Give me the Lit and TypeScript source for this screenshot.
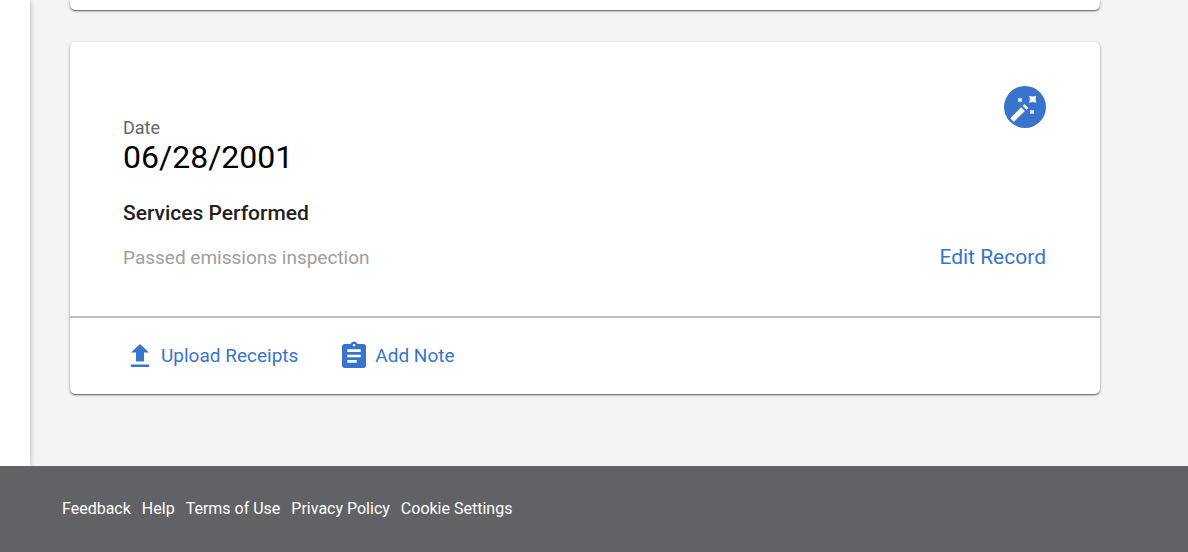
import { LitElement, html, css, svg } from "lit";
import { customElement } from "lit/decorators.js";

const wandIcon = svg`
  <path d="M7 31.4 16.6 21.8Q17.2 21.2 17.8 21.8L20.4 24.4Q21 25 20.4 25.6L10.6 35.2Q9.9 35.9 9.2 35.2L7 33Q6.2 32.2 7 31.4Z"/>
  <path d="M18.6 19.8 20 18.4Q20.4 18 20.8 18.4L24 21.6Q24.4 22 24 22.4L22.6 23.8Z"/>
  <path d="M25.2 9.8Q28.7 11.4 32.2 9.8Q30.8 13.3 32.2 16.8Q28.7 15.4 25.2 16.8Q26.6 13.3 25.2 9.8Z"/>
  <path d="M14 12Q16 12.8 18 12Q17.2 14 18 16Q16 15.2 14 16Q14.8 14 14 12Z"/>
  <path d="M26 24Q28 24.8 30 24Q29.2 26 30 28Q28 27.2 26 28Q26.8 26 26 24Z"/>
`;

@customElement("app-root")
export class AppRoot extends LitElement {
  static styles = css`
    :host {
      display: flex;
      flex-direction: column;
      min-height: 100vh;
      background: #f4f4f4;
      font-family: Roboto, "Liberation Sans", sans-serif;
    }
    .body {
      flex: 1;
      display: grid;
      grid-template-columns: 30px 1fr;
    }
    .rail {
      background: #fff;
      box-shadow: 0 0 5px rgba(0, 0, 0, 0.3);
    }
    .records {
      display: flex;
      flex-direction: column;
      gap: 32px;
      padding: 0 88px 72px 40px;
    }
    .card {
      background: #fff;
      border-radius: 5px;
      box-shadow: 0 1px 3px rgba(0, 0, 0, 0.35), 0 1px 1px rgba(0, 0, 0, 0.4);
    }
    .previous {
      height: 10px;
      border-radius: 0 0 5px 5px;
    }
    .details {
      display: flex;
      justify-content: space-between;
      padding: 44px 54px 45px 53px;
      border-bottom: 2px solid #bdbdbd;
    }
    .summary {
      padding-top: 30px;
    }
    .label,
    .date,
    .heading,
    .service {
      margin: 0;
    }
    .label {
      color: #666;
      font-size: 18px;
      line-height: 24px;
    }
    .date {
      color: #000;
      font-size: 32px;
      line-height: 34px;
    }
    .heading {
      margin-top: 27px;
      color: #212121;
      font-size: 21px;
      font-weight: 500;
      line-height: 24px;
    }
    .service {
      margin-top: 20px;
      color: #9e9e9e;
      font-size: 19px;
      line-height: 26px;
    }
    .side {
      display: flex;
      flex-direction: column;
      align-items: flex-end;
      justify-content: space-between;
    }
    .badge {
      width: 42px;
      height: 42px;
      border-radius: 50%;
      background: #3874cb;
      fill: #fff;
    }
    button {
      padding: 0;
      border: 0;
      background: none;
      color: #3874cb;
      font: inherit;
      cursor: pointer;
    }
    .edit {
      font-size: 21px;
      line-height: 28px;
    }
    .actions {
      display: flex;
      gap: 40px;
      padding: 22px 54px;
    }
    .action {
      display: flex;
      align-items: center;
      gap: 5px;
      font-size: 19px;
      line-height: 32px;
    }
    .action svg {
      width: 32px;
      height: 32px;
      fill: currentColor;
    }
    .footer {
      display: flex;
      gap: 11px;
      padding: 32px 62px;
      background: #616265;
    }
    .footer a {
      color: #fff;
      font-size: 16px;
      line-height: 22px;
      text-decoration: none;
    }
  `;

  render() {
    return html`
      <div class="body">
        <div class="rail"></div>
        <main class="records">
          <div class="card previous"></div>
          <article class="card">
            <div class="details">
              <div class="summary">
                <p class="label">Date</p>
                <p class="date">06/28/2001</p>
                <h2 class="heading">Services Performed</h2>
                <p class="service">Passed emissions inspection</p>
              </div>
              <div class="side">
                <svg class="badge" viewBox="0 0 42 42" aria-hidden="true">${wandIcon}</svg>
                <button class="edit" type="button">Edit Record</button>
              </div>
            </div>
            <div class="actions">
              <button class="action" type="button">
                <svg viewBox="0 0 32 32" aria-hidden="true">
                  <path d="M12 21.5V12.5H7L16 4L25 12.5H20V21.5ZM6.8 24.5H25.2V27H6.8Z" />
                </svg>
                Upload Receipts
              </button>
              <button class="action" type="button">
                <svg viewBox="0 0 32 32" aria-hidden="true">
                  <path fill-rule="evenodd" d="M6.7 4H12.4A3.8 3.8 0 0 1 19.6 4H25.3A2.7 2.7 0 0 1 28 6.7V25.3A2.7 2.7 0 0 1 25.3 28H6.7A2.7 2.7 0 0 1 4 25.3V6.7A2.7 2.7 0 0 1 6.7 4ZM16 4A1.3 1.3 0 1 0 16 6.6A1.3 1.3 0 1 0 16 4ZM9.3 9.3V12H22.7V9.3ZM9.3 14.7V17.3H22.7V14.7ZM9.3 20V22.7H18.7V20Z" />
                </svg>
                Add Note
              </button>
            </div>
          </article>
        </main>
      </div>
      <footer class="footer">
        <a href="#feedback">Feedback</a>
        <a href="#help">Help</a>
        <a href="#terms">Terms of Use</a>
        <a href="#privacy">Privacy Policy</a>
        <a href="#cookies">Cookie Settings</a>
      </footer>
    `;
  }
}
